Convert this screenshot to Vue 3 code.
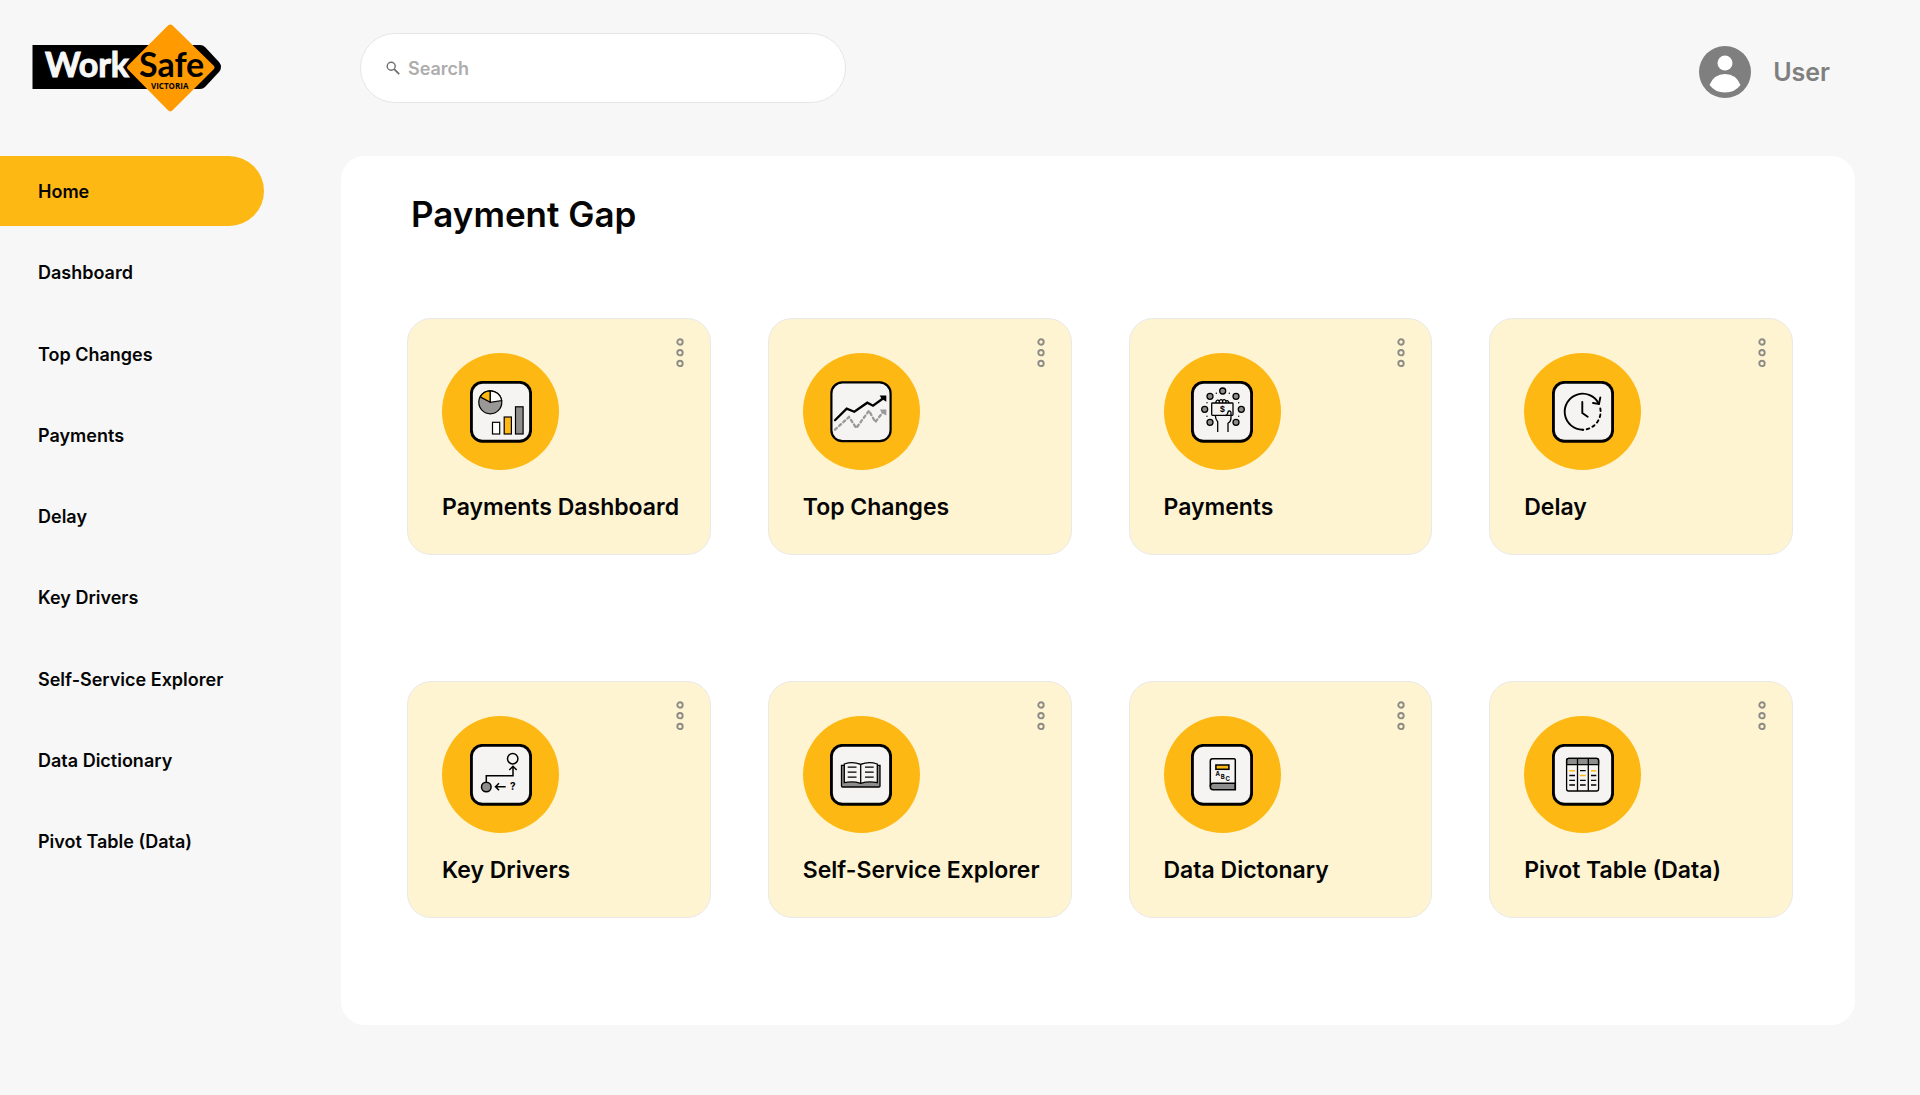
<script setup>
    import { ref } from 'vue';

    const navItems = [
        'Home',
        'Dashboard',
        'Top Changes',
        'Payments',
        'Delay',
        'Key Drivers',
        'Self-Service Explorer',
        'Data Dictionary',
        'Pivot Table (Data)'
    ];

    const cards = [
        { icon: 'dashboard', title: 'Payments Dashboard' },
        { icon: 'changes', title: 'Top Changes' },
        { icon: 'payments', title: 'Payments' },
        { icon: 'delay', title: 'Delay' },
        { icon: 'drivers', title: 'Key Drivers' },
        { icon: 'explorer', title: 'Self-Service Explorer' },
        { icon: 'dictionary', title: 'Data Dictonary' },
        { icon: 'pivot', title: 'Pivot Table (Data)' }
    ];

    const coins = [[31.7, 10], [19, 15.3], [45, 15.3], [13.7, 28.3], [50.3, 28.3], [19, 41.3], [45, 41.3]];
    const sparks = [[25.3, 12.3], [38.3, 12.3], [16, 21.7], [47.7, 21.7], [16, 35.3], [47.7, 35.3]];

    const active = ref('Home');
    const search = ref('');
</script>

<template>
    <div class="page">
        <header class="header">
            <a class="header__logo" href="#" aria-label="WorkSafe Victoria">
                <svg width="200" height="100" viewBox="10 8 200 100">
                    <path d="M12.5 35H180Q183 35 185 37L199 52Q203 57 199 62L185 77Q183 79 180 79H12.5Z" fill="#000" />
                    <text class="logo__work" x="25" y="67">Work</text>
                    <path d="M128 35L104.5 57.5L128 79Z" fill="#000" />
                    <path d="M148 15.5Q150.3 13.3 152.6 15.5L193.5 55.5Q195.5 57.5 193.5 59.5L152.6 100.3Q150.3 102.5 148 100.3L108 59.5Q106 57.5 108 55.5Z" fill="#ff9a00" />
                    <text class="logo__safe" x="119" y="67">Safe</text>
                    <text class="logo__victoria" x="131" y="79">VICTORIA</text>
                </svg>
            </a>

            <label class="header__search">
                <svg width="15" height="15" viewBox="0 0 15 15" fill="none" stroke="#6f6f6f" stroke-width="1.4">
                    <circle cx="5.2" cy="5.2" r="4" />
                    <path d="M8.2 8.2l5 5" stroke-width="1.8" />
                </svg>
                <input v-model="search" type="search" placeholder="Search" aria-label="Search" />
            </label>

            <button class="header__user" type="button">
                <svg width="52" height="52" viewBox="0 0 52 52">
                    <circle cx="26" cy="26" r="26" fill="#7f7f7f" />
                    <circle cx="26" cy="17" r="7.5" fill="#fff" />
                    <path d="M10.5 39Q15 28 26 28Q37 28 41.5 39Q36 46.5 26 46.5Q16 46.5 10.5 39Z" fill="#fff" />
                </svg>
                <span>User</span>
            </button>
        </header>

        <div class="body">
            <nav class="nav">
                <a
                    v-for="item in navItems"
                    :key="item"
                    href="#"
                    class="nav__link"
                    :class="{ 'nav__link--active': item === active }"
                    @click.prevent="active = item"
                >{{ item }}</a>
            </nav>

            <main class="panel">
                <h1 class="panel__title">Payment Gap</h1>

                <div class="cards">
                    <article v-for="card in cards" :key="card.title" class="card">
                        <div class="card__header">
                            <div class="card__circle">
                                <svg width="62" height="62" viewBox="0 0 62 62" fill="none" stroke="#000" aria-hidden="true">
                                    <rect
                                        x="1.4" y="1.4" width="59.2" height="58.8" rx="11"
                                        fill="#f5f4f2"
                                        :stroke-width="card.icon === 'changes' ? 2.2 : 2.9"
                                    />

                                    <g v-if="card.icon === 'dashboard'" stroke-width="1.2">
                                        <circle cx="20.3" cy="21.3" r="11.5" fill="#999896" />
                                        <path d="M20.3 21.3V9.8A11.5 11.5 0 0 0 10.2 15.9Z" fill="#fdb813" />
                                        <path d="M20.3 21.3V9.8A11.5 11.5 0 0 1 31.7 19.5Z" fill="#fff" />
                                        <rect x="22.5" y="41.3" width="7.2" height="11.7" fill="#fff" />
                                        <rect x="34.2" y="36" width="7.2" height="17" fill="#fdb813" />
                                        <rect x="45.5" y="25.8" width="7.6" height="27.2" fill="#8d8d8d" />
                                    </g>

                                    <g v-else-if="card.icon === 'changes'" stroke-width="2.3" stroke-linecap="round">
                                        <path d="M5 39.3L16.7 27.7L24.3 30.7L37.3 21.7L43 24.7L53 17.5" />
                                        <path d="M49.7 14.5H56.3V20.7L53.5 19L51.5 17.5Z" fill="#000" stroke="none" />
                                        <g stroke="#999">
                                            <path d="M5 48.7L19 36L26.3 47L39 29.7L45.3 41L53 31" stroke-dasharray="2.6 3" />
                                            <path d="M50 28.5H56.3V34.5L53.5 33L51.5 31.5Z" fill="#999" stroke="none" />
                                        </g>
                                    </g>

                                    <g v-else-if="card.icon === 'payments'" stroke-width="1.3">
                                        <circle v-for="(c, i) in coins" :key="i" :cx="c[0]" :cy="c[1]" r="3" fill="#8d8d8d" />
                                        <circle v-for="(s, i) in sparks" :key="'s' + i" :cx="s[0]" :cy="s[1]" r="0.7" fill="#000" stroke="none" />
                                        <path d="M25 22V20.5Q26.5 18 28.3 20V22V19.8Q30 17.5 31.6 19.6V22V19.6Q33.3 17.5 34.9 19.8V22V20Q37 18.5 38 22" />
                                        <rect x="20.7" y="22" width="21.3" height="12.3" rx="0.8" fill="#f5f4f2" />
                                        <path d="M24.3 34.5Q24.5 38.5 26.7 40.7V51M37 51V42.3Q40 40.5 40 37V31.5Q39.5 29.5 37.3 30.2L36.4 33Q36 34.3 34.5 34.5" />
                                        <text class="glyph glyph--dollar" x="31.3" y="31.4">$</text>
                                    </g>

                                    <g v-else-if="card.icon === 'delay'" stroke-width="1.9" stroke-linecap="round">
                                        <path d="M30.7 48.7A18 18 0 1 1 46.8 22.7" />
                                        <path d="M48.3 27.5A18 18 0 0 1 30.7 48.7" stroke-dasharray="2.6 3.5" />
                                        <path d="M41 22L47 22.9L48.3 16.5" />
                                        <path d="M30.3 21V32L35.7 35.7" />
                                    </g>

                                    <g v-else-if="card.icon === 'drivers'" stroke-width="1.5">
                                        <circle cx="42.7" cy="14.7" r="5.2" />
                                        <circle cx="16.3" cy="43" r="4.8" fill="#8d8d8d" />
                                        <path d="M16.3 38V31.7H43V22.5M39.3 26L43 22.3L46.7 26" />
                                        <path d="M35.7 42.7H25.5M29 39.2L25.5 42.7L29 46.2" />
                                        <text class="glyph glyph--question" x="42.7" y="45.5">?</text>
                                    </g>

                                    <g v-else-if="card.icon === 'explorer'" stroke-width="1.3">
                                        <path d="M11.5 21.3H50V42Q50 43 49 43H12.5Q11.5 43 11.5 42Z" fill="#8d8d8d" />
                                        <path d="M14.3 20Q22.5 17 30.7 20.3Q39 17 47.3 20V38.7Q39 36.8 30.7 39.3Q22.5 36.8 14.3 38.7Z" fill="#f5f4f2" />
                                        <path d="M30.7 20.3V39.3M17.7 23.2H26.5M17.7 28.2H26.5M17.7 33.2H26.5M35 23.2H43.7M35 28.2H43.7M35 33.2H43.7" />
                                    </g>

                                    <g v-else-if="card.icon === 'dictionary'" stroke-width="1.5">
                                        <path d="M44.3 39.3H22Q19.3 39.3 19.3 42.7Q19.3 45.7 22 45.7H44.3Z" fill="#8d8d8d" />
                                        <path d="M19.3 42.5V17Q19.3 14.7 21.5 14.7H43Q44.3 14.7 44.3 16V45.7" />
                                        <rect x="24.9" y="21" width="13" height="4.3" fill="#fdb813" />
                                        <text class="glyph glyph--letter" x="26.7" y="32.3">A</text>
                                        <text class="glyph glyph--letter" x="31.7" y="35">B</text>
                                        <text class="glyph glyph--letter" x="36.7" y="37.2">C</text>
                                    </g>

                                    <g v-else stroke-width="1.3">
                                        <path d="M14.6 20.7V16.3Q14.6 14.3 16.6 14.3H44.6Q46.6 14.3 46.6 16.3V20.7Z" fill="#8d8d8d" />
                                        <rect x="14.6" y="14.3" width="32" height="32.7" rx="2" />
                                        <path d="M25.5 14.3V47M36.3 14.3V47" />
                                        <path d="M28 26.7H33.7M17.3 31.5H23M39 31.5H44.3M17.3 36.3H23M28 36.3H33.7M39 36.3H44.3M17.3 41H23M28 41H33.7M39 41H44.3" />
                                        <path d="M17.3 26.7H23M39 26.7H44.3M28 31.5H33.7" stroke="#fdb813" stroke-width="1.6" />
                                    </g>
                                </svg>
                            </div>

                            <button class="card__menu" type="button" :aria-label="'Options for ' + card.title">
                                <svg width="8" height="30" viewBox="0 0 8 30" fill="none" stroke="#8d8b85" stroke-width="1.9">
                                    <circle cx="4" cy="4" r="2.7" />
                                    <circle cx="4" cy="14.7" r="2.7" />
                                    <circle cx="4" cy="25.4" r="2.7" />
                                </svg>
                            </button>
                        </div>
                        <a class="card__title" href="#">{{ card.title }}</a>
                    </article>
                </div>
            </main>
        </div>
    </div>
</template>

<style>
    body {
        margin: 0;
        background: #f7f7f7;
    }
</style>

<style scoped>
    .page {
        display: flex;
        flex-direction: column;
        box-sizing: border-box;
        min-height: 100vh;
        padding-bottom: 70px;
        font-family: Inter, sans-serif;
        color: #050505;
    }

    .page a {
        color: inherit;
        text-decoration: none;
    }

    .page button {
        padding: 0;
        border: none;
        background: none;
        font: inherit;
        cursor: pointer;
    }

    .page svg {
        display: block;
        flex-shrink: 0;
    }

    .header {
        display: flex;
        align-items: flex-start;
        padding: 18px 90px 38px 30px;
    }

    .header__logo {
        width: 330px;
    }

    .logo__work,
    .logo__safe {
        font-family: Lato, sans-serif;
        font-size: 34px;
        font-weight: 700;
    }

    .logo__work {
        fill: #f7f7f7;
        stroke: #f7f7f7;
    }

    .logo__safe {
        fill: #000;
    }

    .logo__victoria {
        font-family: "Open Sans", sans-serif;
        font-size: 8px;
        font-weight: 700;
        fill: #000;
    }

    .header__search {
        display: flex;
        align-items: center;
        gap: 7px;
        box-sizing: border-box;
        width: 486px;
        height: 70px;
        margin-top: 15px;
        padding: 1px 25px 0;
        border: 1px solid #e6e6e6;
        border-radius: 35px;
        background: #fff;
    }

    .header__search input {
        flex: 1;
        min-width: 0;
        padding: 0;
        border: none;
        outline: none;
        background: none;
        font: 600 18px/24px Inter, sans-serif;
        color: #050505;
    }

    .header__search input::placeholder {
        color: #adadad;
        opacity: 1;
    }

    .page .header__user {
        display: flex;
        align-items: center;
        gap: 22px;
        margin: 28px 0 0 auto;
        font-size: 25px;
        font-weight: 600;
        color: #7f7f7f;
    }

    .body {
        flex: 1;
        display: flex;
        align-items: stretch;
    }

    .nav {
        display: grid;
        align-content: space-between;
        align-self: flex-start;
        flex: 0 0 264px;
        min-height: 720px;
        margin-right: 77px;
    }

    .nav__link {
        box-sizing: border-box;
        padding: 24px 38px 22px;
        border-radius: 0 35px 35px 0;
        font-size: 18px;
        font-weight: 600;
        line-height: 24px;
        white-space: nowrap;
    }

    .nav__link--active {
        background: #fdb813;
    }

    .panel {
        flex: 1;
        box-sizing: border-box;
        margin-right: 65px;
        padding: 36px 62px 66px 66px;
        border-radius: 24px;
        background: #fff;
    }

    .panel__title {
        margin: 0 0 82px;
        padding-left: 4px;
        font-size: 35px;
        font-weight: 600;
        line-height: 44px;
    }

    .cards {
        display: grid;
        grid-template-columns: repeat(4, minmax(0, 1fr));
        gap: 126px 57px;
    }

    .card {
        box-sizing: border-box;
        padding: 19px 26px 32px 34px;
        border: 1px solid #e9e9e9;
        border-radius: 24px;
        background: #fff4d1;
    }

    .card__header {
        display: flex;
        justify-content: space-between;
        align-items: flex-start;
    }

    .card__circle {
        display: flex;
        align-items: center;
        justify-content: center;
        width: 117px;
        height: 117px;
        margin-top: 15px;
        border-radius: 50%;
        background: #fdb813;
    }

    .card__title {
        display: block;
        margin-top: 22px;
        font-size: 23px;
        font-weight: 600;
        line-height: 30px;
        white-space: nowrap;
    }

    .glyph {
        font-family: Inter, sans-serif;
        font-weight: 700;
        text-anchor: middle;
        fill: #000;
        stroke: none;
    }

    .glyph--dollar {
        font-size: 8px;
    }

    .glyph--question {
        font-size: 10px;
    }

    .glyph--letter {
        font-size: 6px;
    }
</style>
